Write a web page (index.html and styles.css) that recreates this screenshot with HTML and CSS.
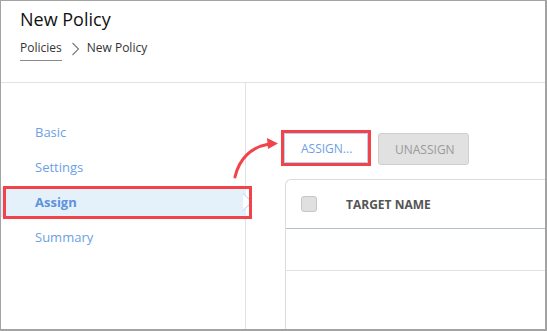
FILE: index.html
```html
<!DOCTYPE html>
<html lang="en">
<head>
    <meta charset="UTF-8">
    <title>New Policy</title>
    <link rel="stylesheet" href="styles.css">
</head>
<body>
    <div class="frame">
        <div class="page-header">
            <h1 class="page-title">New Policy</h1>
            <div class="breadcrumb">
                <a class="crumb-link">Policies</a>
                <svg class="crumb-sep" width="9" height="14" viewBox="0 0 9 14">
                    <polyline points="1.5,1 7.5,7 1.5,13" fill="none" stroke="#7a7a7a" stroke-width="1.1"/>
                </svg>
                <span class="crumb-current">New Policy</span>
            </div>
        </div>

        <div class="main">
            <ul class="steps">
                <li class="step">Basic</li>
                <li class="step">Settings</li>
                <li class="step active">
                    Assign
                    <svg class="step-pointer" width="12" height="18" viewBox="0 0 12 18">
                        <polygon points="0,0 9,9 0,18" fill="#ffffff"/>
                        <polyline points="0,0.5 9,9 0,17.5" fill="none" stroke="#a9d1f2" stroke-width="1"/>
                    </svg>
                    <span class="callout-box"></span>
                </li>
                <li class="step">Summary</li>
            </ul>

            <div class="content">
                <div class="toolbar">
                    <button class="btn btn-assign">ASSIGN...</button>
                    <button class="btn btn-disabled">UNASSIGN</button>
                </div>

                <div class="grid-card">
                    <div class="grid-head">
                        <span class="checkbox"></span>
                        <span class="col-title">TARGET NAME</span>
                    </div>
                    <div class="grid-row"></div>
                </div>
            </div>

            <!-- annotation arrow -->
            <svg class="callout-arrow" width="60" height="50" viewBox="0 0 60 50">
                <path d="M6 46 C 10 28, 22 16, 40 13" fill="none" stroke="#f2434b" stroke-width="3" stroke-linecap="round"/>
                <polygon points="38,7 49,12.5 39,18" fill="#f2434b"/>
            </svg>
        </div>
    </div>
</body>
</html>
```

FILE: styles.css
```css
* {
    box-sizing: border-box;
}

body {
    margin: 0;
    font-family: "Open Sans", "Noto Sans", Arial, sans-serif;
    background: #fff;
}

.frame {
    width: 547px;
    height: 331px;
    border: 1px solid #a3a3a3;
    border-right-width: 2px;
    border-bottom-width: 2px;
    overflow: hidden;
    display: flex;
    flex-direction: column;
}

/* header */
.page-header {
    flex-shrink: 0;
    height: 82px;
    padding: 5px 19px 0;
    border-bottom: 1px solid #e2e2e2;
}

.page-title {
    margin: 0;
    font-size: 18px;
    font-weight: 400;
    line-height: 26px;
    color: #111;
}

.breadcrumb {
    display: flex;
    align-items: center;
    margin-top: 5px;
    font-size: 12px;
    color: #333;
}

.crumb-link {
    padding: 2px 0 4px;
    border-bottom: 1px solid #8a8a8a;
    color: #333;
}

.crumb-sep {
    margin: 0 7px 0 9px;
}

.crumb-current {
    padding-bottom: 3px;
}

/* body */
.main {
    flex: 1;
    min-height: 0;
    display: flex;
    position: relative;
}

.steps {
    list-style: none;
    margin: 0;
    padding: 34px 0 0;
    width: 245px;
    border-right: 1px solid #e2e2e2;
}

.step {
    position: relative;
    height: 30px;
    margin-bottom: 5px;
    padding-left: 34px;
    line-height: 30px;
    font-size: 13px;
    color: #6d9fe6;
}

.step.active {
    background: #e4f0fa;
    font-weight: 700;
    color: #5f92dc;
    margin-right: -1px;
}

.step-pointer {
    position: absolute;
    right: -9px;
    top: 6px;
}

.callout-box {
    position: absolute;
    left: 2px;
    right: -6px;
    top: -1px;
    bottom: -2px;
    border: 3px solid #f2434b;
}

.content {
    flex: 1;
    padding: 50px 0 0 38px;
}

.toolbar {
    display: flex;
    gap: 10px;
}

.btn {
    height: 30px;
    padding: 0 16px;
    font-family: inherit;
    font-size: 12px;
    border-radius: 3px;
}

.btn-assign {
    width: 84px;
    background: #fff;
    color: #6d9fe6;
    border: 1px solid #b6d3f3;
    outline: 3px solid #f2434b;
    border-radius: 0;
}

.btn-disabled {
    width: 91px;
    height: 32px;
    background: #e1e1e1;
    color: #9a9a9a;
    border: 1px solid #cfcfcf;
}

.grid-card {
    margin: 14px 0 0 1px;
    height: 200px;
    border: 1px solid #dcdcdc;
    border-right: none;
    border-top-left-radius: 6px;
}

.grid-head {
    display: flex;
    align-items: center;
    height: 49px;
    padding-left: 15px;
    border-bottom: 1px solid #b5c1c9;
}

.checkbox {
    width: 16px;
    height: 16px;
    background: #e0e0e0;
    border: 1px solid #c6c6c6;
    border-radius: 3px;
}

.col-title {
    margin-left: 29px;
    font-size: 12px;
    font-weight: 700;
    color: #555;
}

.grid-row {
    height: 42px;
    border-bottom: 1px solid #e2e2e2;
}

.callout-arrow {
    position: absolute;
    left: 228px;
    top: 48px;
}
```
